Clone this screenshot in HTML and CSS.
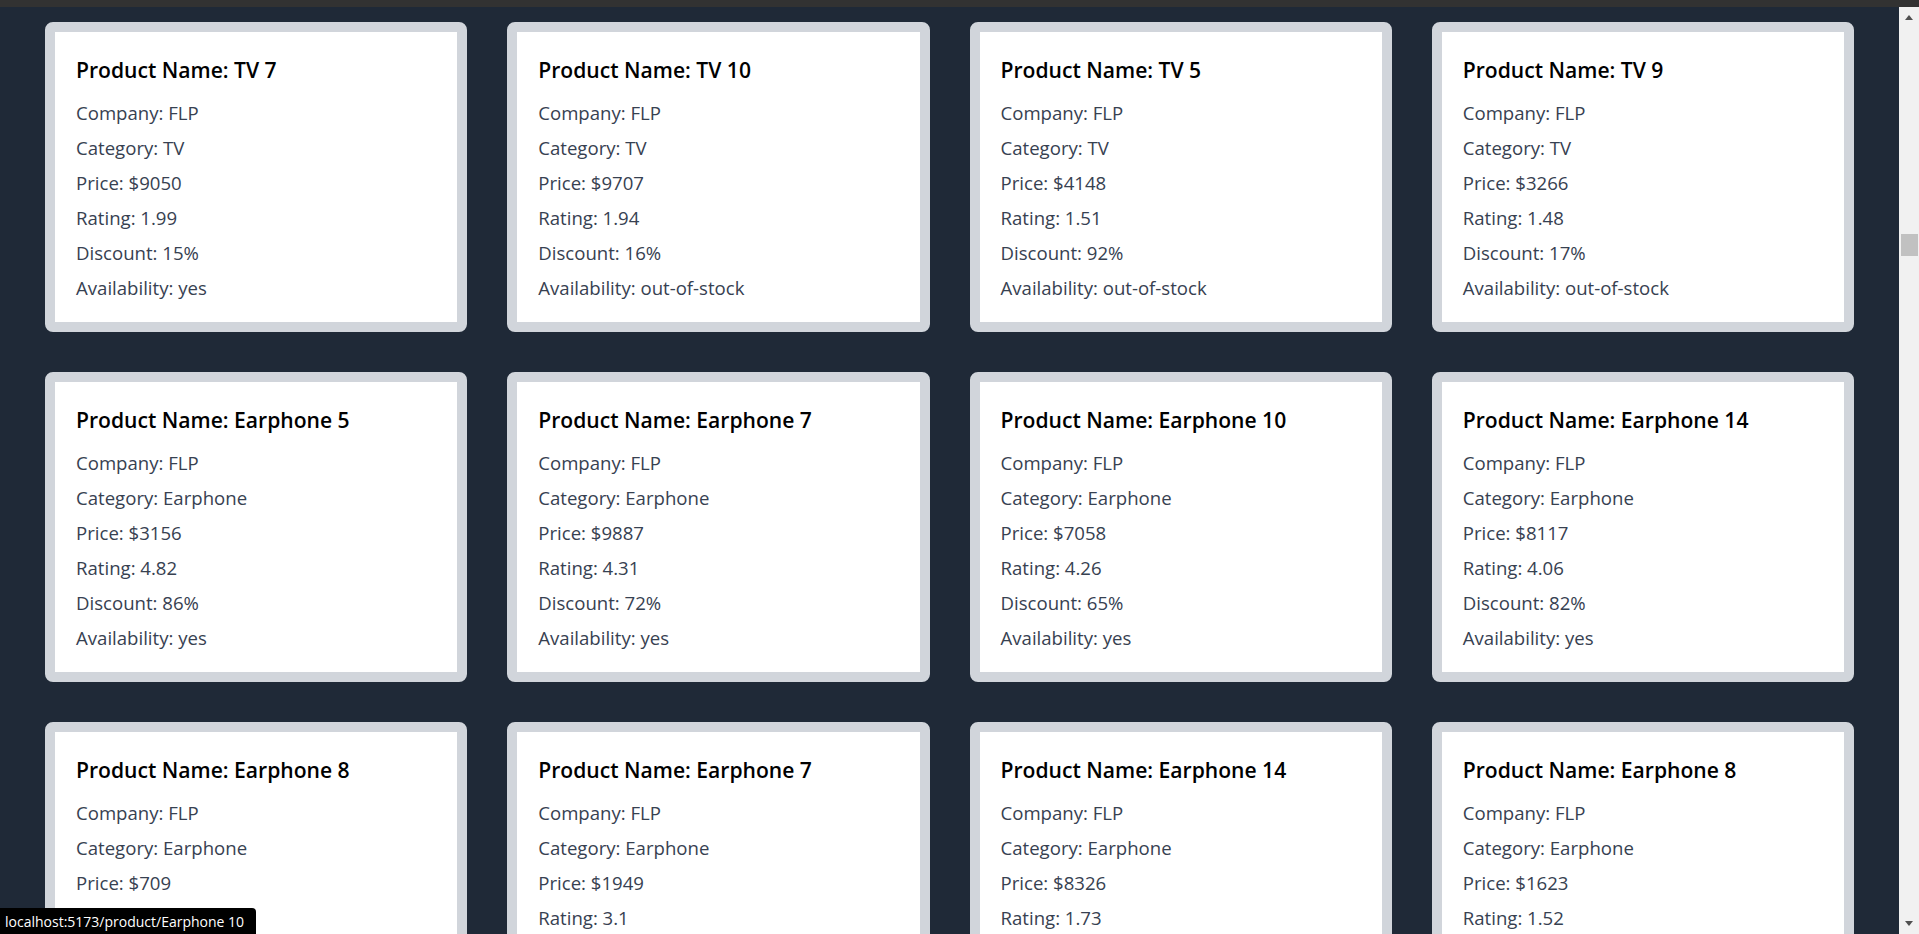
FILE: index.html
```html
<!DOCTYPE html>
<html lang="en">
<head>
<meta charset="utf-8">
<title>Products</title>
<link rel="stylesheet" href="styles.css">
</head>
<body>
<div class="topstrip"></div>
<main class="grid">
  <div class="card"><h2 class="title">Product Name: TV 7</h2><p class="line">Company: FLP</p><p class="line">Category: TV</p><p class="line">Price: $9050</p><p class="line">Rating: 1.99</p><p class="line">Discount: 15%</p><p class="line">Availability: yes</p></div>
  <div class="card"><h2 class="title">Product Name: TV 10</h2><p class="line">Company: FLP</p><p class="line">Category: TV</p><p class="line">Price: $9707</p><p class="line">Rating: 1.94</p><p class="line">Discount: 16%</p><p class="line">Availability: out-of-stock</p></div>
  <div class="card"><h2 class="title">Product Name: TV 5</h2><p class="line">Company: FLP</p><p class="line">Category: TV</p><p class="line">Price: $4148</p><p class="line">Rating: 1.51</p><p class="line">Discount: 92%</p><p class="line">Availability: out-of-stock</p></div>
  <div class="card"><h2 class="title">Product Name: TV 9</h2><p class="line">Company: FLP</p><p class="line">Category: TV</p><p class="line">Price: $3266</p><p class="line">Rating: 1.48</p><p class="line">Discount: 17%</p><p class="line">Availability: out-of-stock</p></div>

  <div class="card"><h2 class="title">Product Name: Earphone 5</h2><p class="line">Company: FLP</p><p class="line">Category: Earphone</p><p class="line">Price: $3156</p><p class="line">Rating: 4.82</p><p class="line">Discount: 86%</p><p class="line">Availability: yes</p></div>
  <div class="card"><h2 class="title">Product Name: Earphone 7</h2><p class="line">Company: FLP</p><p class="line">Category: Earphone</p><p class="line">Price: $9887</p><p class="line">Rating: 4.31</p><p class="line">Discount: 72%</p><p class="line">Availability: yes</p></div>
  <div class="card"><h2 class="title">Product Name: Earphone 10</h2><p class="line">Company: FLP</p><p class="line">Category: Earphone</p><p class="line">Price: $7058</p><p class="line">Rating: 4.26</p><p class="line">Discount: 65%</p><p class="line">Availability: yes</p></div>
  <div class="card"><h2 class="title">Product Name: Earphone 14</h2><p class="line">Company: FLP</p><p class="line">Category: Earphone</p><p class="line">Price: $8117</p><p class="line">Rating: 4.06</p><p class="line">Discount: 82%</p><p class="line">Availability: yes</p></div>

  <div class="card"><h2 class="title">Product Name: Earphone 8</h2><p class="line">Company: FLP</p><p class="line">Category: Earphone</p><p class="line">Price: $709</p><p class="line">Rating: 2.43</p><p class="line">Discount: 40%</p><p class="line">Availability: yes</p></div>
  <div class="card"><h2 class="title">Product Name: Earphone 7</h2><p class="line">Company: FLP</p><p class="line">Category: Earphone</p><p class="line">Price: $1949</p><p class="line">Rating: 3.1</p><p class="line">Discount: 51%</p><p class="line">Availability: yes</p></div>
  <div class="card"><h2 class="title">Product Name: Earphone 14</h2><p class="line">Company: FLP</p><p class="line">Category: Earphone</p><p class="line">Price: $8326</p><p class="line">Rating: 1.73</p><p class="line">Discount: 9%</p><p class="line">Availability: yes</p></div>
  <div class="card"><h2 class="title">Product Name: Earphone 8</h2><p class="line">Company: FLP</p><p class="line">Category: Earphone</p><p class="line">Price: $1623</p><p class="line">Rating: 1.52</p><p class="line">Discount: 33%</p><p class="line">Availability: yes</p></div>
</main>
<div class="scrollbar">
  <div class="arrow-up"></div>
  <div class="track"><div class="thumb"></div></div>
  <div class="arrow-down"></div>
</div>
<div class="status">localhost:5173/product/Earphone 10</div>
</body>
</html>
```

FILE: styles.css
```css
html, body {
  margin: 0;
  padding: 0;
  height: 100%;
  overflow: hidden;
}
body {
  background: #1f2937;
  font-family: "Open Sans", "Noto Sans", sans-serif;
}
.topstrip {
  position: fixed;
  top: 0;
  left: 0;
  right: 0;
  height: 7px;
  background: #323232;
  z-index: 5;
}
.grid {
  width: 1899px;
  box-sizing: border-box;
  display: grid;
  grid-template-columns: repeat(4, 1fr);
  gap: 40px;
  padding: 22px 45px;
}
.card {
  height: 310px;
  box-sizing: border-box;
  background: #ffffff;
  border: 10px solid #d1d5db;
  border-radius: 8px;
  padding: 22px 21px 20px 21px;
}
.title {
  margin: 0 0 13px 0;
  font-size: 21.1px;
  line-height: 32px;
  font-weight: 600;
  color: #000000;
}
.line {
  margin: 0 0 8px 0;
  font-size: 18.6px;
  line-height: 27px;
  color: #374151;
}
.scrollbar {
  position: fixed;
  top: 7px;
  right: 0;
  bottom: 0;
  width: 20px;
  background: #f1f1f1;
  display: flex;
  flex-direction: column;
  align-items: center;
}
.arrow-up, .arrow-down {
  width: 0;
  height: 0;
  border-left: 4px solid transparent;
  border-right: 4px solid transparent;
  margin: 8px 0;
}
.arrow-up { border-bottom: 5px solid #505050; }
.arrow-down { border-top: 5px solid #505050; margin-bottom: 8px; }
.track {
  flex: 1;
  width: 100%;
}
.thumb {
  margin: 206px 1px 0 2px;
  height: 22px;
  background: #c1c1c1;
}
.status {
  position: fixed;
  left: 0;
  bottom: 0;
  height: 26px;
  box-sizing: border-box;
  padding: 4px 12px 0 5px;
  background: #000000;
  color: #ffffff;
  font-size: 14px;
  line-height: 20px;
  border-top-right-radius: 4px;
  z-index: 6;
}
```
